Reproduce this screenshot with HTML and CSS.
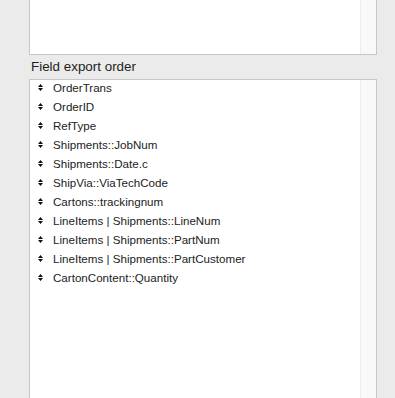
FILE: index.html
```html
<!DOCTYPE html>
<html lang="en">
<head>
    <meta charset="UTF-8">
    <title>Field export order</title>
    <link rel="stylesheet" href="styles.css">
</head>
<body>
<div class="panel">
    <div class="box top-box">
        <div class="track"></div>
    </div>
    <div class="label">Field export order</div>
    <div class="box order-box">
        <ul class="fields">
            <li><svg class="handle" width="5" height="7" viewBox="0 0 5 7"><path d="M2.5 0L5 3H0z M0 4H5L2.5 7z"/></svg>OrderTrans</li>
            <li><svg class="handle" width="5" height="7" viewBox="0 0 5 7"><path d="M2.5 0L5 3H0z M0 4H5L2.5 7z"/></svg>OrderID</li>
            <li><svg class="handle" width="5" height="7" viewBox="0 0 5 7"><path d="M2.5 0L5 3H0z M0 4H5L2.5 7z"/></svg>RefType</li>
            <li><svg class="handle" width="5" height="7" viewBox="0 0 5 7"><path d="M2.5 0L5 3H0z M0 4H5L2.5 7z"/></svg>Shipments::JobNum</li>
            <li><svg class="handle" width="5" height="7" viewBox="0 0 5 7"><path d="M2.5 0L5 3H0z M0 4H5L2.5 7z"/></svg>Shipments::Date.c</li>
            <li><svg class="handle" width="5" height="7" viewBox="0 0 5 7"><path d="M2.5 0L5 3H0z M0 4H5L2.5 7z"/></svg>ShipVia::ViaTechCode</li>
            <li><svg class="handle" width="5" height="7" viewBox="0 0 5 7"><path d="M2.5 0L5 3H0z M0 4H5L2.5 7z"/></svg>Cartons::trackingnum</li>
            <li><svg class="handle" width="5" height="7" viewBox="0 0 5 7"><path d="M2.5 0L5 3H0z M0 4H5L2.5 7z"/></svg>LineItems | Shipments::LineNum</li>
            <li><svg class="handle" width="5" height="7" viewBox="0 0 5 7"><path d="M2.5 0L5 3H0z M0 4H5L2.5 7z"/></svg>LineItems | Shipments::PartNum</li>
            <li><svg class="handle" width="5" height="7" viewBox="0 0 5 7"><path d="M2.5 0L5 3H0z M0 4H5L2.5 7z"/></svg>LineItems | Shipments::PartCustomer</li>
            <li><svg class="handle" width="5" height="7" viewBox="0 0 5 7"><path d="M2.5 0L5 3H0z M0 4H5L2.5 7z"/></svg>CartonContent::Quantity</li>
        </ul>
        <div class="track"></div>
    </div>
</div>
</body>
</html>
```

FILE: styles.css
```css
*{margin: 0;padding: 0;box-sizing: border-box;}
html, body{height: 100%;overflow: hidden;}
body{background: #ebebeb;font-family: "Liberation Sans", Arial, sans-serif;color: #222;}
.panel{padding-left: 29px;width: 377px;height: 100%;display: flex;flex-direction: column;}
.box{background: #fff;border: 1px solid #c6c6c6;display: flex;}
.top-box{height: 55px;border-top: 0;}
.order-box{flex: 1;border-bottom: 0;}
.track{width: 16px;margin-left: auto;background: #f9f9f9;border-left: 1px solid #ededed;}
.label{height: 24px;line-height: 24px;font-size: 13.4px;padding-left: 2px;color: #1e1e1e;}
.fields{list-style: none;flex: 1;margin-top: -2px;}
.fields li{height: 19px;line-height: 19px;font-size: 11.6px;display: flex;align-items: center;}
.handle{fill: #111;margin: 0 10px 0 8px;}
```
